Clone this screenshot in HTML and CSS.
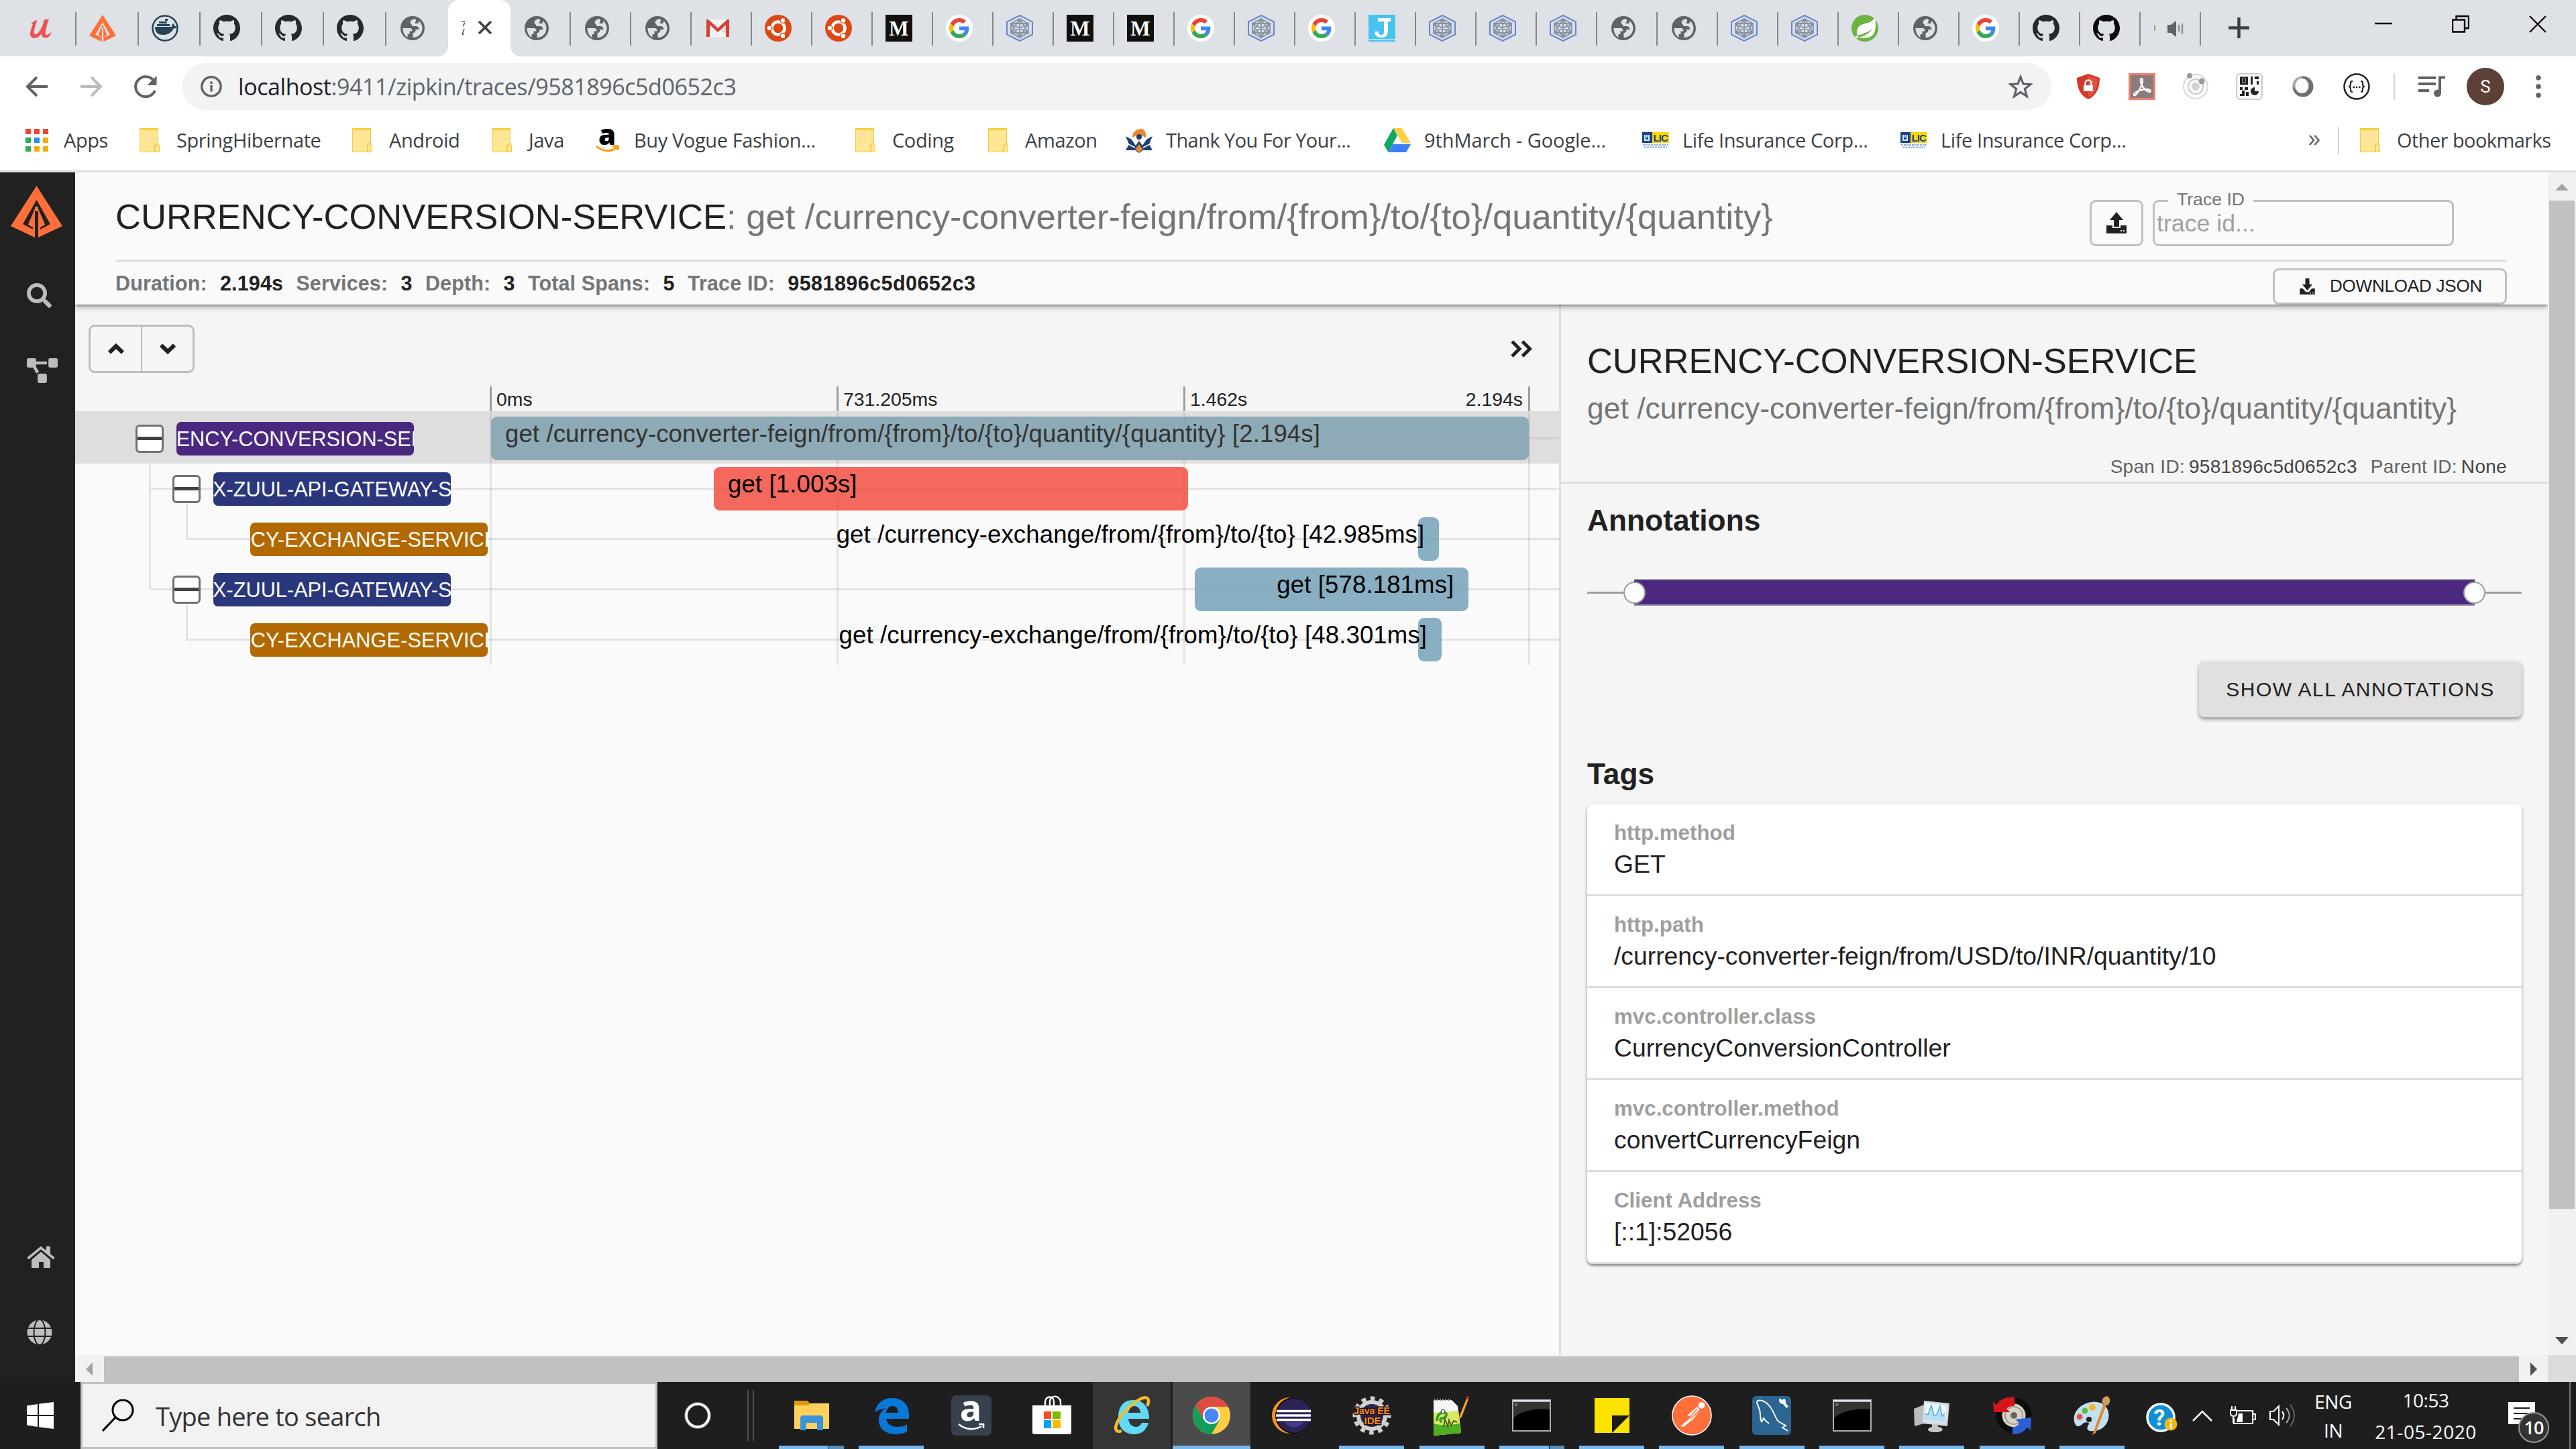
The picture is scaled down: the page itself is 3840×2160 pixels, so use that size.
FILE: index.html
```html
<!DOCTYPE html>
<html lang="en">
<head>
<meta charset="utf-8">
<title>Zipkin</title>
<link rel="stylesheet" href="styles.css">
</head>
<body>
<svg class="defs" aria-hidden="true">
  <symbol id="globe" viewBox="0 0 40 40"><circle cx="20" cy="20" r="18" fill="#5f6368"/><path d="M5.500 20h10c3 0 4 2 4 4.500h-4V29h-3v5C8 31 5.500 26 5.500 20zM25 6c-4 0-8 2-8.500 5 0 3 3 3 3 6h5c3 0 5 2 5 5h-5c0 4-2 5-4 5v7c8 0 14-6 14-14 0-4-2-8-5-11l-1 4h-5c0-2 3-3 .500-7z" fill="#dee1e6"/></symbol>
  <symbol id="github" viewBox="0 0 16 16"><path d="M8 0C3.58 0 0 3.58 0 8c0 3.54 2.29 6.53 5.47 7.59.4.07.55-.17.55-.38 0-.19-.01-.82-.01-1.49-2.01.37-2.53-.49-2.69-.94-.09-.23-.48-.94-.82-1.13-.28-.15-.68-.52-.01-.53.63-.01 1.08.58 1.23.82.72 1.21 1.87.87 2.33.66.07-.52.28-.87.51-1.07-1.78-.2-3.64-.89-3.64-3.95 0-.87.31-1.59.82-2.15-.08-.2-.36-1.02.08-2.12 0 0 .67-.21 2.2.82.64-.18 1.32-.27 2-.27s1.36.09 2 .27c1.53-1.04 2.2-.82 2.2-.82.44 1.1.16 1.92.08 2.12.51.56.82 1.27.82 2.15 0 3.07-1.87 3.75-3.65 3.95.29.25.54.73.54 1.48 0 1.07-.01 1.93-.01 2.2 0 .21.15.46.55.38A8.01 8.01 0 0016 8c0-4.42-3.58-8-8-8z"/></symbol>
  <symbol id="google" viewBox="0 0 40 40"><circle cx="20" cy="20" r="20" fill="#fff"/><g transform="translate(5 5) scale(.625)"><path fill="#EA4335" d="M24 9.5c3.54 0 6.71 1.22 9.21 3.6l6.85-6.85C35.9 2.38 30.47 0 24 0 14.62 0 6.51 5.38 2.56 13.22l7.98 6.19C12.43 13.72 17.74 9.5 24 9.5z"/><path fill="#4285F4" d="M46.98 24.55c0-1.57-.15-3.09-.38-4.55H24v9.02h12.94c-.58 2.96-2.26 5.48-4.78 7.18l7.73 6c4.51-4.18 7.09-10.36 7.09-17.65z"/><path fill="#FBBC05" d="M10.53 28.59c-.48-1.45-.76-2.99-.76-4.59s.27-3.14.76-4.59l-7.98-6.19C.92 16.46 0 20.12 0 24c0 3.88.92 7.54 2.56 10.78l7.97-6.19z"/><path fill="#34A853" d="M24 48c6.48 0 11.93-2.13 15.89-5.81l-7.73-6c-2.15 1.45-4.92 2.3-8.16 2.3-6.26 0-11.57-4.22-13.47-9.91l-7.98 6.19C6.51 42.62 14.62 48 24 48z"/></g></symbol>
  <symbol id="hex" viewBox="0 0 40 40"><path d="M20 1l19 9.500v19L20 39 1 29.500v-19z" fill="#d8dff0" stroke="#6a84c8" stroke-width="2"/><path d="M20 6l13 7v14l-13 7-13-7V13zM20 6v28M7 13l26 14M33 13L7 27M20 6L7 27h26zM20 34L7 13h26z" fill="none" stroke="#87929c" stroke-width="1.800"/></symbol>
  <symbol id="medium" viewBox="0 0 40 40"><path d="M0 0h40v40H0z" fill="#12100e"/><text x="20" y="31" text-anchor="middle" font-family="Liberation Serif, serif" font-weight="bold" font-size="31" fill="#fff">M</text></symbol>
  <symbol id="ubuntu" viewBox="0 0 40 40"><circle cx="20" cy="20" r="20" fill="#dd4814"/><circle cx="20" cy="20" r="9.500" fill="none" stroke="#fff" stroke-width="4.500"/><g fill="#fff" stroke="#dd4814" stroke-width="1.500"><circle cx="7" cy="20" r="4"/><circle cx="27" cy="8.500" r="4"/><circle cx="27" cy="31.500" r="4"/></g></symbol>
  <symbol id="zipkin" viewBox="0 0 77 77"><path fill="#ff7038" fill-rule="evenodd" d="M38.500 0L77 60 41 77V31h-5v46L0 60zM38.500 21L18 57l15 8v-6l-6-4 8.500-17h6L50 55l-6 4v6l15-8z"/><path fill="#ff7038" d="M36 34v30l-10-6zM41 34v30l10-6z"/></symbol>
  <symbol id="folder" viewBox="0 0 30 36"><path d="M.5.5h27v25h2v10H.5z" fill="#ffe694" stroke="#f0cb45"/><path d="M.5.500h27v2.500h-27z" fill="#f9cf3a"/><path d="M23 35.500v-9c0-4 5-4 5-1" fill="none" stroke="#f0c23a" stroke-width="1.500"/></symbol>
  <symbol id="lic" viewBox="0 0 40 24"><path d="M0 0h15v16H0z" fill="#14438e"/><path d="M15 0h25v16H15z" fill="#ffd500"/><path d="M4 4v8h6V4M7 4v4" stroke="#dfe8f5" stroke-width="2" fill="none"/><text x="27.500" y="14" text-anchor="middle" font-family="Liberation Sans, sans-serif" font-size="15" font-weight="bold" textLength="22" fill="#14438e">LIC</text><path d="M1 19h38M3 22.500h34" stroke="#8fabd2" stroke-width="2" stroke-dasharray="3 1"/></symbol>
  <symbol id="cmd" viewBox="0 0 58 48"><path d="M0 0h58v48H0z" fill="#a9afb4"/><path d="M2 4h54v42H2z" fill="#000"/><path d="M2 4h54v11C34 13 12 18 2 28z" fill="#333"/><path d="M1 1h56v2H1z" fill="#dfe5ea"/><path d="M4 7h5M4 9h3" stroke="#aaa"/></symbol>
</svg>

<div class="tabs">
  <div class="tab early"><svg viewBox="0 0 40 40"><path d="M5 13c5-3 9-6 9-5 0 3-5 13-4 19 2 7 10-4 13-13l2-7h7c-3 8-7 21-4 23 2 1 4-2 8-4-2 6-6 9-10 8-4 0-5-3-5-6-5 8-17 10-17 0 0-5 3-11 4-14z" fill="#ec5252"/></svg></div>
  <div class="tab early"><svg><use href="#zipkin"/></svg></div>
  <div class="tab early"><svg viewBox="0 0 40 40"><circle cx="20" cy="20" r="18.500" fill="none" stroke="#254356" stroke-width="2.500"/><path d="M5 18h25c0-3 1-4 2-5 2 1 2 3 2 4 1 0 3 0 4 1-1 2-3 3-5 2-3 7-9 10-16 10C9 30 5 26 5 18z" fill="#254356"/><path d="M8 14h19v3H8zM11 10h12v3H11zM20 6h4v3h-4z" fill="#254356"/></svg></div>
  <div class="tab early"><svg fill="#24292e"><use href="#github"/></svg></div>
  <div class="tab early"><svg fill="#24292e"><use href="#github"/></svg></div>
  <div class="tab early"><svg fill="#24292e"><use href="#github"/></svg></div>
  <div class="tab early last"><svg><use href="#globe"/></svg></div>
  <div class="tab active"><svg class="sliver" viewBox="0 0 5 22"><path d="M0 1h5M5 3L2 8M4 12L1 20h3" stroke="#555" stroke-width="1.500" fill="none"/></svg><svg class="close" viewBox="0 0 20 20"><path d="M1 1l18 18M19 1L1 19" stroke="#3c4043" stroke-width="3.500"/></svg></div>
  <div class="tab"><svg><use href="#globe"/></svg></div>
  <div class="tab"><svg><use href="#globe"/></svg></div>
  <div class="tab"><svg><use href="#globe"/></svg></div>
  <div class="tab"><svg viewBox="0 0 40 40"><path d="M3 7h34v26H3z" fill="#f2f2f2"/><path d="M20 20l17 13V9z" fill="#dcdcdc"/><path d="M3 33V7h3l14 13L34 7h3v26h-5V15L20 26 8 15v18z" fill="#d93f35"/></svg></div>
  <div class="tab"><svg><use href="#ubuntu"/></svg></div>
  <div class="tab"><svg><use href="#ubuntu"/></svg></div>
  <div class="tab"><svg><use href="#medium"/></svg></div>
  <div class="tab"><svg><use href="#google"/></svg></div>
  <div class="tab"><svg><use href="#hex"/></svg></div>
  <div class="tab"><svg><use href="#medium"/></svg></div>
  <div class="tab"><svg><use href="#medium"/></svg></div>
  <div class="tab"><svg><use href="#google"/></svg></div>
  <div class="tab"><svg><use href="#hex"/></svg></div>
  <div class="tab"><svg><use href="#google"/></svg></div>
  <div class="tab"><svg viewBox="0 0 40 40"><path d="M0 0h40v40H0z" fill="#46c3ee"/><path d="M0 36h40v2H0z" fill="#a5e2f7"/><path d="M14 5h19v5h-4v13c0 8-4 11-9 11-7 0-11-3-11-9h6c0 3 1 5 4 5s4-2 4-6V10h-9z" fill="#fff"/></svg></div>
  <div class="tab"><svg><use href="#hex"/></svg></div>
  <div class="tab"><svg><use href="#hex"/></svg></div>
  <div class="tab"><svg><use href="#hex"/></svg></div>
  <div class="tab"><svg><use href="#globe"/></svg></div>
  <div class="tab"><svg><use href="#globe"/></svg></div>
  <div class="tab"><svg><use href="#hex"/></svg></div>
  <div class="tab"><svg><use href="#hex"/></svg></div>
  <div class="tab"><svg viewBox="0 0 40 40"><circle cx="20" cy="20" r="20" fill="#6db33f"/><path d="M35 4c2 13 2 27-10 30-6 1-12 0-16 0 12-2 18-7 22-13-6 5-12 7-22 10-3-7 0-14 8-17 8-2 14-3 18-10z" fill="#fff"/><circle cx="7.500" cy="33" r="1.800" fill="#fff"/></svg></div>
  <div class="tab"><svg><use href="#globe"/></svg></div>
  <div class="tab"><svg><use href="#google"/></svg></div>
  <div class="tab"><svg fill="#24292e"><use href="#github"/></svg></div>
  <div class="tab"><svg fill="#0d0a0c"><use href="#github"/></svg></div>
  <div class="tab"><svg viewBox="0 0 40 40"><path d="M2 16v8" stroke="#7a8a35" stroke-width="1.500"/><path d="M21 15h5l8-6v24l-8-6h-5z" fill="#5f6368"/><path d="M38 15v10M43 13v15" stroke="#8a8d91" stroke-width="2.500"/></svg></div>
  <svg class="newtab" viewBox="0 0 31 31"><path d="M15.500 0v31M0 15.500h31" stroke="#3c4043" stroke-width="4.500"/></svg>
  <div class="winctl">
    <svg viewBox="0 0 26 26"><path d="M0 12h26" stroke="#000" stroke-width="2.500"/></svg>
    <svg viewBox="0 0 26 26"><path d="M1 6.500h18v18H1zM6.500 6V1.200H25V19h-5" fill="none" stroke="#000" stroke-width="2.400"/></svg>
    <svg viewBox="0 0 26 26"><path d="M1 1l24 24M25 1L1 25" stroke="#000" stroke-width="2.200"/></svg>
  </div>
</div>

<div class="toolbar">
  <svg class="nav" viewBox="0 0 34 34"><path d="M33 17H3M17 3L3 17l14 14" fill="none" stroke="#5f6368" stroke-width="4"/></svg>
  <svg class="nav" viewBox="0 0 34 34"><path d="M1 17h30M17 3l14 14-14 14" fill="none" stroke="#babcbe" stroke-width="4"/></svg>
  <svg class="nav" viewBox="0 0 34 34"><path d="M29 8A15 15 0 1 0 31 23" fill="none" stroke="#5f6368" stroke-width="4"/><path d="M33.500 1v14h-14z" fill="#5f6368"/></svg>
  <div class="omnibox">
    <svg class="info" viewBox="0 0 32 32"><circle cx="16" cy="16" r="14.200" fill="none" stroke="#5f6368" stroke-width="3.400"/><path d="M16 14v9.500M16 8.500v3.500" stroke="#5f6368" stroke-width="3.400"/></svg>
    <span class="url"><b>localhost</b>:9411/zipkin/traces/9581896c5d0652c3</span>
    <svg class="star" viewBox="0 0 36 36"><path d="M18 3.500l4 10.500 11 .6-8.600 7 3 11L18 26.400 8.600 32.600l3-11-8.600-7L14 14z" fill="none" stroke="#5f6368" stroke-width="3.200"/></svg>
  </div>
  <div class="exts">
    <svg viewBox="0 0 40 40"><path d="M20 1l17 6c0 14-4 26-17 32C7 33 3 21 3 7z" fill="#d33a2c"/><path d="M20 4l14 5c0 11-4 22-14 27z" fill="#e0503f"/><path d="M13 18h14v9H13z" fill="#fff"/><path d="M15.500 18v-3a4.500 4.500 0 0 1 9 0v3" fill="none" stroke="#fff" stroke-width="2.400"/></svg>
    <svg viewBox="0 0 40 40"><path d="M1.500 1.500h37v37h-37z" fill="#8a7c7b" stroke="#f0806f" stroke-width="3"/><path d="M19 8c4 0 1 10-3 17-4 8-8 10-8 7 0-4 12-8 19-8s7 5 3 4c-5-2-12-10-12-16 0-2 0-4 1-4z" fill="none" stroke="#fff" stroke-width="2.400"/></svg>
    <svg viewBox="0 0 40 40"><circle cx="20" cy="20" r="18" fill="none" stroke="#d9d9d9" stroke-width="2"/><circle cx="20" cy="20" r="11" fill="none" stroke="#cfcfcf" stroke-width="2.500"/><circle cx="20" cy="20" r="6" fill="#d2d2d2"/><circle cx="11" cy="4" r="4" fill="#999"/><circle cx="29" cy="12" r="4.500" fill="#999"/></svg>
    <svg viewBox="0 0 40 40"><rect x="1" y="1" width="38" height="38" rx="5" fill="#f8f8f8" stroke="#ccc" stroke-width="2"/><path d="M7.500 7h9v9h-9zM11 10.500h2v2h-2z" fill="none" stroke="#222" stroke-width="3"/><path d="M22 5h3v12h-3zM28 5h6v4h-6zM31 12h3v5h-3zM6 21h4v4H6zM13 21h5v4h-5zM9 26h4v8H6v-3h3zM15 28h4v6h-4z" fill="#222"/><path d="M28 21v6h6a6 6 0 1 1-6-6z" fill="#222"/></svg>
    <svg viewBox="0 0 40 40"><circle cx="20" cy="20" r="15.500" fill="#707070"/><path d="M20 4.500a15.500 15.500 0 0 0-15.500 15.500l7 7 8-22z" fill="#a3a3a3"/><ellipse cx="18.500" cy="19" rx="10" ry="11" fill="#fbfbfb"/></svg>
    <svg viewBox="0 0 40 40"><circle cx="20" cy="20" r="18.500" fill="#fff" stroke="#222" stroke-width="2.500"/><path d="M14 12c-3 0-3 1-3 4s-1 4-3 4c2 0 3 1 3 4s0 4 3 4M26 12c3 0 3 1 3 4s1 4 3 4c-2 0-3 1-3 4s0 4-3 4" fill="none" stroke="#222" stroke-width="2.200"/><path d="M14.500 21h2.400m1.900 0h2.400m1.900 0h2.400" stroke="#222" stroke-width="2.400"/></svg>
  </div>
  <i class="vsep"></i>
  <svg class="playlist" viewBox="0 0 40 32"><path d="M0 3h26M0 12h26M0 22h16" stroke="#5f6368" stroke-width="4"/><path d="M32 27V2.500h8" fill="none" stroke="#5f6368" stroke-width="4"/><circle cx="28.500" cy="26" r="5.500" fill="#5f6368"/></svg>
  <span class="avatar">S</span>
  <svg class="dots" viewBox="0 0 8 34"><g fill="#5f6368"><circle cx="4" cy="4" r="3.800"/><circle cx="4" cy="17" r="3.800"/><circle cx="4" cy="30" r="3.800"/></g></svg>
</div>

<div class="bookmarks">
  <div class="bm"><svg viewBox="0 0 40 40"><g fill="#f44336"><path d="M3 3h8v8H3zM16 3h8v8h-8zM29 3h8v8h-8z"/></g><path d="M3 16h8v8H3zM3 29h8v8H3z" fill="#34a853"/><path d="M16 16h8v8h-8z" fill="#2b8cf5"/><path d="M29 16h8v8h-8zM16 29h8v8h-8zM29 29h8v8h-8z" fill="#f9ab00"/></svg><span>Apps</span></div>
  <div class="bm"><svg class="fold"><use href="#folder"/></svg><span>SpringHibernate</span></div>
  <div class="bm"><svg class="fold"><use href="#folder"/></svg><span>Android</span></div>
  <div class="bm"><svg class="fold"><use href="#folder"/></svg><span>Java</span></div>
  <div class="bm"><svg viewBox="0 0 40 40"><text x="20" y="27" text-anchor="middle" font-family="Open Sans, sans-serif" font-weight="800" font-size="42">a</text><path d="M4 29c9 8 22 9 30 2M28 29h8v6" fill="none" stroke="#f90" stroke-width="3"/></svg><span>Buy Vogue Fashion...</span></div>
  <div class="bm"><svg class="fold"><use href="#folder"/></svg><span>Coding</span></div>
  <div class="bm"><svg class="fold"><use href="#folder"/></svg><span>Amazon</span></div>
  <div class="bm tight"><svg viewBox="0 0 40 40"><path d="M10 16c0-8 5-13 15-13 4 3 6 8 5 13l-6-3-4 8-4-8z" fill="#e8862a"/><path d="M0 14l9 5 6 9 5-7 5 7 6-9 9-5-5 12 5 9H26l-6 4-6-4H0l5-9z" fill="#1d3f72"/><circle cx="20" cy="15" r="4" fill="#1d3f72"/><path d="M14 34l6-8 6 8-6 4z" fill="#e8862a"/><path d="M2 25l12 6M38 25l-12 6" stroke="#fff" stroke-width="1.500"/></svg><span>Thank You For Your...</span></div>
  <div class="bm loose"><svg viewBox="0 0 40 40"><path d="M14 2h13l13 22H27z" fill="#ffcf48"/><path d="M14 2L0 27l6.500 11L20 13z" fill="#11a861"/><path d="M6.500 38L13 26h27l-7 12z" fill="#3c80f6"/></svg><span>9thMarch - Google...</span></div>
  <div class="bm"><svg><use href="#lic"/></svg><span>Life Insurance Corp...</span></div>
  <div class="bm"><svg><use href="#lic"/></svg><span>Life Insurance Corp...</span></div>
  <svg class="more" viewBox="0 0 16 16"><path d="M1 1l6 7-6 7M8.500 1l6 7-6 7" fill="none" stroke="#5f6368" stroke-width="2.600"/></svg>
  <div class="bm other tight"><svg class="fold"><use href="#folder"/></svg><span>Other bookmarks</span></div>
</div>

<div class="page">
  <nav class="side">
    <svg class="brand"><use href="#zipkin"/></svg>
    <svg class="s-search" viewBox="0 0 512 512"><path d="M505 442.700L405.300 343c-4.500-4.500-10.600-7-17-7H372c27.600-35.300 44-79.700 44-128C416 93.100 322.900 0 208 0S0 93.100 0 208s93.100 208 208 208c48.300 0 92.700-16.400 128-44v16.300c0 6.400 2.500 12.500 7 17l99.700 99.700c9.400 9.400 24.600 9.400 33.900 0l28.300-28.300c9.400-9.400 9.400-24.600.1-34zM208 336c-70.700 0-128-57.200-128-128 0-70.700 57.200-128 128-128 70.700 0 128 57.200 128 128 0 70.700-57.200 128-128 128z"/></svg>
    <svg class="s-dep" viewBox="0 0 640 512"><path d="M384 320H256c-17.670 0-32 14.330-32 32v128c0 17.670 14.330 32 32 32h128c17.670 0 32-14.330 32-32V352c0-17.670-14.330-32-32-32zM192 32c0-17.670-14.330-32-32-32H32C14.330 0 0 14.330 0 32v128c0 17.670 14.330 32 32 32h95.720l73.160 128.040C211.980 300.980 232.400 288 256 288h.28L192 175.510V128h224V64H192V32zM608 0H480c-17.670 0-32 14.330-32 32v128c0 17.670 14.330 32 32 32h128c17.670 0 32-14.330 32-32V32c0-17.670-14.330-32-32-32z"/></svg>
    <svg class="s-home" viewBox="0 0 42 32"><path d="M21 8l14 12v12H25v-9h-7v9H7V20z"/><path d="M1.500 18L21 2l19.500 16" fill="none" stroke="#bdbdbd" stroke-width="3.600"/><path d="M29 0h6v12l-6-5z"/></svg>
    <svg class="s-globe" viewBox="0 0 38 38"><circle cx="19" cy="19" r="18.500"/><path d="M0 13h38M0 25h38" stroke="#212121" stroke-width="2"/><ellipse cx="19" cy="19" rx="8.500" ry="19" fill="none" stroke="#212121" stroke-width="2"/></svg>
  </nav>

  <div class="main">
    <header class="head">
      <div class="head-top">
        <h1>CURRENCY-CONVERSION-SERVICE<em>: get /currency-converter-feign/from/{from}/to/{to}/quantity/{quantity}</em></h1>
        <button class="upload"><svg viewBox="0 0 32 32"><path d="M16 0l10 12h-6v10h-8V12H6z"/><path d="M1 20h9v4h12v-4h9v12H1z"/><path d="M22 28h2m2 0h2" stroke="#fafafa" stroke-width="2"/></svg></button>
        <div class="field"><span class="legend">Trace ID</span><span class="ph">trace id...</span></div>
      </div>
      <div class="head-stats">
        <b>Duration:</b><strong>2.194s</strong><b>Services:</b><strong>3</strong><b>Depth:</b><strong>3</strong><b>Total Spans:</b><strong>5</strong><b>Trace ID:</b><strong class="tid">9581896c5d0652c3</strong>
        <button class="download"><svg viewBox="0 0 32 32"><path d="M16 24L6 12h6V0h8v12h6z"/><path d="M1 20h6l6 7h6l6-7h6v12H1z"/><path d="M21 29h2m3 0h2" stroke="#fafafa" stroke-width="2"/></svg><span>DOWNLOAD JSON</span></button>
      </div>
    </header>

    <div class="body">
      <section class="trace">
        <div class="trace-tools">
          <div class="updown"><button><svg viewBox="0 0 26 18"><path d="M3 14.500L13 5l10 9.500" fill="none" stroke="#212121" stroke-width="6"/></svg></button><button><svg viewBox="0 0 26 18"><path d="M3 3.500L13 13l10-9.500" fill="none" stroke="#212121" stroke-width="6"/></svg></button></div>
          <svg class="collapse" viewBox="0 0 34 26"><path d="M3 2l11 11L3 24M18.500 2l11 11-11 11" fill="none" stroke="#212121" stroke-width="5"/></svg>
        </div>
        <div class="ticks"><span>0ms</span><span>731.205ms</span><span class="two"><i>1.462s</i><i>2.194s</i></span></div>
        <div class="rows">
          <div class="gridlines"><i></i><i></i><i></i></div>
          <div class="row sel">
            <div class="tree l0"><i class="tog"></i><span class="svc purple"><b>CURRENCY-CONVERSION-SERVICE</b></span></div>
            <div class="lane"><div class="bar" style="margin-left:0.06%;width:99.9%"><span>get /currency-converter-feign/from/{from}/to/{to}/quantity/{quantity} [2.194s]</span></div></div>
          </div>
          <div class="row down2">
            <div class="tree l1"><i class="tog"></i><span class="svc blue"><b>NETFLIX-ZUUL-API-GATEWAY-SERVER</b></span></div>
            <div class="lane"><div class="bar red" style="margin-left:21.500%;width:45.640%"><span>get [1.003s]</span></div></div>
          </div>
          <div class="row down1">
            <div class="tree l2"><span class="svc orange"><b>CURRENCY-EXCHANGE-SERVICE</b></span></div>
            <div class="lane"><div class="bar" style="margin-left:89.300%;width:2%"><span class="left out">get /currency-exchange/from/{from}/to/{to} [42.985ms]</span></div></div>
          </div>
          <div class="row">
            <div class="tree l1"><i class="tog"></i><span class="svc blue"><b>NETFLIX-ZUUL-API-GATEWAY-SERVER</b></span></div>
            <div class="lane"><div class="bar" style="margin-left:67.800%;width:26.350%"><span class="left">get [578.181ms]</span></div></div>
          </div>
          <div class="row down1">
            <div class="tree l2"><span class="svc orange"><b>CURRENCY-EXCHANGE-SERVICE</b></span></div>
            <div class="lane"><div class="bar" style="margin-left:89.300%;width:2.250%"><span class="left out">get /currency-exchange/from/{from}/to/{to} [48.301ms]</span></div></div>
          </div>
        </div>
      </section>

      <aside class="detail">
        <div class="d-head">
          <h2>CURRENCY-CONVERSION-SERVICE</h2>
          <p class="sub">get /currency-converter-feign/from/{from}/to/{to}/quantity/{quantity}</p>
          <p class="ids"><span>Span ID:</span><b>9581896c5d0652c3</b><span class="pid">Parent ID:</span><b>None</b></p>
        </div>
        <div class="d-body">
          <h3>Annotations</h3>
          <div class="slider"><i></i><i></i></div>
          <button class="showall"><span>SHOW ALL ANNOTATIONS</span></button>
          <h3 class="tags-h">Tags</h3>
          <dl class="tags">
            <div><dt>http.method</dt><dd>GET</dd></div>
            <div><dt>http.path</dt><dd>/currency-converter-feign/from/USD/to/INR/quantity/10</dd></div>
            <div><dt>mvc.controller.class</dt><dd>CurrencyConversionController</dd></div>
            <div><dt>mvc.controller.method</dt><dd>convertCurrencyFeign</dd></div>
            <div><dt>Client Address</dt><dd>[::1]:52056</dd></div>
          </dl>
        </div>
      </aside>
    </div>
    <div class="hbar"><i class="al"></i><div class="thumb"></div><i class="ar"></i></div>
  </div>

  <div class="vbar"><i class="au"></i><div class="thumb"></div><i class="ad"></i><div class="corner"></div></div>
</div>

<div class="taskbar">
  <div class="start"><svg viewBox="0 0 40 40"><path d="M0 5.500l16-2.500v16H0zM18 2.700L40 0v19H18zM0 21h16v16L0 34.500zM18 21h22v19l-22-2.800z" fill="#fff"/></svg></div>
  <div class="search"><svg viewBox="0 0 48 48"><circle cx="31" cy="16" r="15" fill="none" stroke="#000" stroke-width="3"/><path d="M20 27L1 47" stroke="#000" stroke-width="3"/></svg><span>Type here to search</span></div>
  <svg class="cortana" viewBox="0 0 40 40"><circle cx="20" cy="20" r="17.200" fill="none" stroke="#888" stroke-width="5"/><circle cx="20" cy="20" r="17" fill="none" stroke="#fff" stroke-width="3.600"/></svg>
  <i class="grip"></i>
  <div class="apps">
    <div class="app run multi"><svg viewBox="0 0 60 60"><path d="M4 8h20l4 5v10H4z" fill="#dd9d00"/><path d="M4 15h21l3-3h28v38H4z" fill="#ffd15c"/><path d="M13 52V34c0-2 1-4 4-4h26c3 0 4 2 4 4v18H38V41H22v11z" fill="#3a94dc"/></svg></div>
    <div class="app run"><svg viewBox="0 0 60 60"><path d="M5 25C8 11 18 4 31 4c16 0 25 11 25 24v7H22c1 8 8 12 16 12 6 0 11-1 15-4v11c-5 3-11 4-17 4-15 0-25-9-25-21 0-8 4-15 11-18-7 1-13 3-17 6zm17 1h18c0-6-3-10-9-10-5 0-9 5-9 10z" fill="#0a78d7"/></svg></div>
    <div class="app"><svg viewBox="0 0 60 60"><rect width="60" height="60" rx="7" fill="#36414d"/><text x="29" y="38" text-anchor="middle" font-family="Open Sans, sans-serif" font-weight="bold" font-size="54" fill="#fff">a</text><path d="M11 43c11 9 24 9 34 3M41 43h7v6" fill="none" stroke="#fff" stroke-width="2.600"/></svg></div>
    <div class="app"><svg viewBox="0 0 60 60"><path d="M1 15h58v40c0 2-1 3-3 3H4c-2 0-3-1-3-3z" fill="#fff"/><path d="M20 16V10c0-10 13-10 13 0v6M27 16V9c0-10 16-10 16 2v5" fill="none" stroke="#fff" stroke-width="2.400"/><path d="M18 24h11v11H18z" fill="#f25022"/><path d="M31 24h12v11H31z" fill="#7fba00"/><path d="M18 37h11v12H18z" fill="#00a4ef"/><path d="M31 37h12v12H31z" fill="#ffb900"/></svg></div>
    <div class="app hov"><svg viewBox="0 0 60 60"><path d="M32 7c16 0 24 11 24 28H25c1 8 6 12 11 12 4 0 7-2 9-6h10c-3 11-11 17-21 17-15 0-24-10-24-25S17 7 32 7zm-7 19h18c0-6-4-10-9-10s-8 4-9 10z" fill="#62d9f5"/><path d="M15 53c-14 5-11-13 6-30C36 7 50 0 54 5c2 3 1 7-1 11" fill="none" stroke="#f4be2c" stroke-width="4.500"/></svg></div>
    <div class="app act"><svg viewBox="0 0 60 60"><circle cx="30" cy="30" r="28" fill="#ffcd41"/><path d="M30 17h25A28 28 0 0 0 6.500 15l12 22z" fill="#dc4c40"/><path d="M18.500 37L6.500 15A28 28 0 0 0 30 58l12-21z" fill="#149c5b"/><circle cx="30" cy="30" r="13" fill="#fff"/><circle cx="30" cy="30" r="10.500" fill="#4687f4"/></svg></div>
    <div class="app"><svg viewBox="0 0 60 60"><path d="M28 3a27 27 0 0 0 0 54C4 46 8 12 28 3z" fill="#f7941e"/><circle cx="33" cy="30" r="27" fill="#111"/><circle cx="34" cy="30" r="25.500" fill="#2c2255"/><path d="M20 40h28c-5 10-22 10-28 0z" fill="#46388c"/><path d="M8 23.500h51M7 30h52M8 36.500h51" stroke="#fff" stroke-width="3.400"/></svg></div>
    <div class="app run"><svg viewBox="0 0 60 60"><circle cx="30" cy="30" r="25.500" fill="none" stroke="#d0d0d0" stroke-width="6" stroke-dasharray="6.700 6.650" stroke-dashoffset="3"/><circle cx="30" cy="30" r="20" fill="#2e2257" stroke="#d0d0d0" stroke-width="6"/><g font-family="Liberation Sans, sans-serif" font-weight="bold" fill="#ff8b1f" stroke="#1a1210" stroke-width="3" paint-order="stroke" text-anchor="middle"><text x="30" y="28" font-size="14">Java EE</text><text x="31" y="43" font-size="15">IDE</text></g></svg></div>
    <div class="app run"><svg viewBox="0 0 60 60"><path d="M3 7h27l9 9 5 40-41 4z" fill="#f4f7f4"/><path d="M3 26l37-3 4 33-41 4z" fill="#d7ea62"/><path d="M3 42c14 4 27 2 40 0l1 14-41 4z" fill="#4fae22"/><path d="M8 38c0-9 6-14 12-12 4 2 1 8-3 8s-5 3-2 6" fill="none" stroke="#3f9a2a" stroke-width="4"/><circle cx="17" cy="24" r="3" fill="#fff" stroke="#333"/><path d="M18 47l2-11 4 10 2-9 3 8 4-7 5 2" fill="none" stroke="#4b5a20" stroke-width="2"/><path d="M4 6.500h25" stroke="#888" stroke-width="3" stroke-dasharray="2 2"/><path d="M39 38l3-8L52 5l3 1-10 26z" fill="#f5a623"/><path d="M52 5l1.500-4 2.500 1-1.500 4z" fill="#d33"/></svg></div>
    <div class="app run multi"><svg class="cmdi"><use href="#cmd"/></svg></div>
    <div class="app run"><svg viewBox="0 0 60 60"><path d="M4 4h52v52H4z" fill="#ffe300"/><path d="M30 30h26L30 56z" fill="#1c1c1c"/></svg></div>
    <div class="app run"><svg viewBox="0 0 60 60"><circle cx="30" cy="30" r="29" fill="#ff6f3c" stroke="#fff" stroke-width="1.600"/><circle cx="44.500" cy="15" r="4.800" fill="#fff"/><path d="M38 17l4 5-10 14-7 5-7 6-5-1 12-10 4-5-6-1z" fill="#fff"/><path d="M38 20L26 34M41 22L28 36" stroke="#ff6f3c" stroke-width="1.400"/></svg></div>
    <div class="app run"><svg viewBox="0 0 60 60"><rect x="1" y="1" width="58" height="58" rx="6" fill="#2c6591"/><path d="M15 40c-3-7-1-15-4-21-1-5-5-8-2-11 7-2 15 3 20 11 5 7 7 16 11 20l11 6-5 3 8 5M15 40l3-6c2 4 5 5 8 8" fill="none" stroke="#fff" stroke-width="1.900"/><path d="M42 4l3 3 4-2c3 3 1 5 3 8l3 4-3 2-5-6c-4 0-6-3-6-6z" fill="#fff"/></svg></div>
    <div class="app run"><svg class="cmdi"><use href="#cmd"/></svg></div>
    <div class="app run"><svg viewBox="0 0 60 60"><path d="M3 20l15-6v28L4 46z" fill="#b9bdc1"/><path d="M18 8l38 4-3 34-37-4z" fill="#d5dade"/><path d="M20 11l32 4-3 27-31-4z" fill="#eef7fc"/><path d="M19 27l5 2 5-14 4 15 4-1 5-13 3 15 4-4v14l-31-4z" fill="#b8dff2"/><path d="M19 27l5 2 5-14 4 15 4-1 5-13 3 15 4-4" fill="none" stroke="#5aaede" stroke-width="1.600"/><path d="M30 43h8l1 4c10 1 9 8-4 8s-14-6-5-8z" fill="#c6c9cc"/></svg></div>
    <div class="app run"><svg viewBox="0 0 60 60"><circle cx="33" cy="30" r="22" fill="#d8d2c4" stroke="#0c0c0c" stroke-width="9"/><circle cx="33" cy="30" r="13" fill="none" stroke="#a59e8e" stroke-width="2"/><circle cx="33" cy="30" r="5" fill="#666"/><path d="M2 10l5 4C14 5 22 2 34 3v13c-7 0-10 1-12 5l6 4H3z" fill="#d6141c"/><path d="M58 52l-5-4c-7 8-12 10-22 10V47c6 0 8-2 10-6l-6-5 24-3z" fill="#2d5fd7"/></svg></div>
    <div class="app run"><svg viewBox="0 0 60 60"><path d="M30 10C48 8 58 20 55 35 52 48 40 55 27 53c-6-1-3-8-1-10 1-3-5-4-9-1-4 4-8 6-11 2C-1 32 8 13 30 10z" fill="#c3e0f0"/><circle cx="12" cy="32" r="4.500" fill="#e5534a"/><circle cx="20" cy="23" r="4.500" fill="#58b947"/><circle cx="31" cy="18" r="5" fill="#f7b52c"/><circle cx="26" cy="36" r="4" fill="#1e1e1e"/><path d="M48 12l4 2-16 42-5 3z" fill="#e08b2e"/><path d="M46 12c-2-6 2-10 7-11 6 4 5 9 1 14z" fill="#cf9d63"/></svg></div>
  </div>
  <div class="tray">
    <svg class="help" viewBox="0 0 48 44"><circle cx="23" cy="22" r="20" fill="#0f8fd5" stroke="#fff" stroke-width="3.500"/><text x="21" y="34" text-anchor="middle" font-family="Roboto, sans-serif" font-weight="bold" font-size="34" fill="#fff">?</text><circle cx="38" cy="32" r="9.500" fill="#f5b50f"/><path d="M38 25.500v3m0 2v8" stroke="#fff" stroke-width="3"/></svg>
    <svg class="caret" viewBox="0 0 30 17"><path d="M1 16L15 2l14 14" fill="none" stroke="#fff" stroke-width="2.500"/></svg>
    <svg class="batt" viewBox="0 0 40 28"><path d="M11 7h24v19H7v-8M36 12h3v8h-3" fill="none" stroke="#fff" stroke-width="2.200"/><path d="M14 11h6v13h-9z" fill="#fff"/><path d="M4 0v6m5-6v6M2 6h9v5c0 3-2 4-4.500 4S2 14 2 11zM6 15v10" fill="none" stroke="#fff" stroke-width="2"/></svg>
    <svg class="vol" viewBox="0 0 40 36"><path d="M1 12h5l8-8v28l-8-8H1z" fill="none" stroke="#fff" stroke-width="2"/><path d="M19 12c3 4 3 8 0 12" fill="none" stroke="#fff" stroke-width="2.200"/><path d="M25 7c6 7 6 15 0 22" fill="none" stroke="#aaa" stroke-width="2"/><path d="M31 2c8 10 8 22 0 32" fill="none" stroke="#666" stroke-width="2"/></svg>
    <div class="stack lang"><span>ENG</span><span>IN</span></div>
    <div class="stack clock"><span>10:53</span><span class="date">21-05-2020</span></div>
    <div class="note"><svg viewBox="0 0 40 40"><path d="M0 0h40v33H26l-8 7v-7H0z" fill="#fff"/><path d="M8 9h24M8 17h24M8 25h16" stroke="#1e1e1e" stroke-width="2"/></svg><span>10</span></div>
    <i class="peek"></i>
  </div>
</div>
</body>
</html>
```
FILE: styles.css
```css
* { box-sizing: border-box; }
html, body { margin: 0; padding: 0; }
body { width: 3840px; height: 2160px; overflow: hidden; display: flex; flex-direction: column; position: relative; background: #fff; font-family: "Liberation Sans", Arial, sans-serif; color: #212121; }
button { font: inherit; color: inherit; padding: 0; margin: 0; background: none; border: 0; }
svg { display: block; flex: none; }
h1, h2, h3, p, dl, dd, dt { margin: 0; font-weight: 400; }
em, i { font-style: normal; }
.defs { display: none; }

/* tab strip */
.tabs { height: 84px; background: #dee1e6; display: flex; padding-left: 22px; flex: none; }
.tab { width: 90px; height: 84px; padding: 22px 0 0 19px; flex: none; background: linear-gradient(#84888d, #84888d) right 18px / 2px 50px no-repeat; }
.tab svg { width: 40px; height: 40px; overflow: visible; }
.tab.early { width: 92.300px; }
.tab.last { background: none; }
.tab.active { width: 92.900px; background: #fff; border-radius: 16px 16px 0 0; padding: 31px 0 0 20px; display: flex; gap: 20px; position: relative; }
.tab.active::before, .tab.active::after { content: ""; position: absolute; bottom: 0; width: 16px; height: 16px; }
.tab.active::before { left: -16px; background: radial-gradient(circle at 0 0, transparent 16px, #fff 16px); }
.tab.active::after { right: -16px; background: radial-gradient(circle at 100% 0, transparent 16px, #fff 16px); }
.tab.active .sliver { width: 5px; height: 22px; }
.tab.active .close { width: 20px; height: 20px; }
.newtab { width: 31px; height: 31px; margin: 26px 0 0 41px; }
.winctl { display: flex; gap: 89px; margin: 23px 44px 0 auto; }
.winctl svg { width: 26px; height: 26px; }

/* toolbar */
.toolbar { height: 90px; display: flex; align-items: center; padding-left: 38px; flex: none; }
.nav { width: 34px; height: 34px; margin-right: 47px; }
.nav + .nav + .nav { margin-right: 37px; }
.omnibox { width: 2787px; height: 70px; border-radius: 35px; background: #f1f3f4; display: flex; align-items: center; padding: 0 28px; }
.info { width: 32px; height: 32px; margin-right: 24px; }
.url { font: 34px/70px "Open Sans", "Noto Sans", sans-serif; color: #5f6368; letter-spacing: -.43px; }
.url b { font-weight: 400; color: #202124; }
.star { width: 36px; height: 36px; margin-left: auto; }
.exts { display: flex; gap: 40px; margin-left: 35px; }
.exts svg { width: 40px; height: 40px; }
.vsep { width: 2px; height: 40px; background: #d0d2d5; margin-left: 35px; }
.playlist { width: 40px; height: 32px; margin-left: 35px; }
.avatar { width: 56px; height: 56px; border-radius: 50%; background: #5d4037; color: #fff; font: 26px/56px Roboto, sans-serif; text-align: center; margin-left: 32px; }
.dots { width: 8px; height: 34px; margin-left: 47px; }

/* bookmarks */
.bookmarks { height: 83px; flex: none; border-bottom: 3px solid #dadce0; padding: 0 0 10px 35px; display: grid; grid-template-columns: 168px 317px 208px 157px 385px 198px 210px 385px 385px 385px 609px 43px 1fr; align-items: center; }
.bm { display: flex; align-items: center; gap: 20px; font: 29px/40px "Open Sans", "Noto Sans", sans-serif; color: #3c4043; letter-spacing: -.4px; white-space: nowrap; }
.bm.tight { letter-spacing: -.57px; }
.bm.loose { letter-spacing: -.1px; }
.bm svg { width: 40px; height: 40px; }
.bm svg.fold { width: 30px; height: 36px; margin: 0 5px; }
.more { width: 16px; height: 16px; }
.other { border-left: 2px solid #d0d2d5; padding-left: 26px; }

/* page */
.page { flex: none; height: 1803px; display: flex; }
.side { width: 112px; background: #212121; display: flex; flex-direction: column; padding-left: 40px; fill: #bdbdbd; }
.side .brand { width: 77px; height: 77px; margin: 20px 0 0 -24px; }
.s-search { width: 37px; height: 37px; margin-top: 68px; }
.s-dep { width: 46px; height: 37px; margin-top: 75px; }
.s-home { width: 42px; height: 32px; margin-top: auto; }
.s-globe { width: 38px; height: 38px; margin: 77px 0 55px; }
.main { width: 3686px; display: flex; flex-direction: column; }
.head { height: 197px; background: #fafafa; padding: 0 61px 0 60px; position: relative; z-index: 2; box-shadow: 0 4px 8px rgba(0,0,0,.3), 0 1px 4px rgba(0,0,0,.35); clip-path: inset(0 0 -12px 0); }
.head-top { height: 133px; border-bottom: 3px solid #dedede; display: flex; align-items: center; }
.head h1 { font-size: 52.550px; white-space: pre; }
.head em { color: #757575; }
.upload { width: 80px; height: 69px; border: 3px solid #c0c0c0; border-radius: 9px; margin: 20px 14px 0 auto; display: grid; place-items: center; }
.upload svg { width: 32px; height: 32px; fill: #212121; }
.field { width: 449px; height: 69px; border: 3px solid #c0c0c0; border-radius: 9px; margin: 20px 79px 0 0; position: relative; padding-left: 3px; line-height: 64px; font-size: 35.700px; }
.field .ph { color: #a0a0a0; }
.legend { position: absolute; left: 20px; top: -20px; padding: 0 13px; background: #fafafa; font-size: 26.600px; line-height: 32px; color: #757575; white-space: nowrap; }
.head-stats { height: 64px; display: flex; align-items: center; gap: 19.300px; font-size: 30.500px; letter-spacing: .13px; white-space: nowrap; }
.head-stats b { color: #757575; }
.head-stats .tid { letter-spacing: .45px; }
.download { width: 349px; height: 54px; border: 3px solid #c0c0c0; border-radius: 9px; margin: 9px 0 0 auto; display: flex; align-items: center; padding-left: 36px; font-size: 26px; letter-spacing: -.2px; gap: 21px; }
.download svg { width: 25px; height: 24px; fill: #212121; }

.body { display: flex; height: 1566px; }
.trace { width: 2212px; background: #fafafa; }
.trace-tools { height: 122px; background: #f5f5f5; display: flex; justify-content: space-between; padding: 30px 39px 0 20px; }
.updown { display: flex; width: 158px; height: 72px; border: 3px solid #bdbdbd; border-radius: 9px; }
.updown button { flex: 1; display: grid; place-items: center; }
.updown button + button { border-left: 2px solid #bdbdbd; }
.updown svg { width: 26px; height: 18px; }
.collapse { width: 34px; height: 26px; margin-top: 23px; }
.ticks { height: 37px; background: #f5f5f5; padding: 0 43px 0 618px; display: grid; grid-template-columns: repeat(3, 1fr); font-size: 28.400px; line-height: 38px; }
.ticks > span { border-left: 3px solid #9e9e9e; padding-left: 7px; }
.ticks .two { border-right: 3px solid #9e9e9e; display: flex; justify-content: space-between; padding-right: 8px; }
.rows { position: relative; }
.gridlines { position: absolute; inset: 3px 43px 0 618px; display: grid; grid-template-columns: repeat(3, 1fr); z-index: 1; }
.gridlines i { border-left: 3px solid rgba(0,0,0,.085); }
.gridlines i:last-child { border-right: 3px solid rgba(0,0,0,.085); }
.row { height: 75px; display: flex; align-items: center; position: relative; }
.row::before { content: ""; position: absolute; right: 0; top: 36px; height: 3px; left: 111px; background: #e3e3e3; }
.row.sel { height: 78px; padding-top: 3px; background: #dedede; }
.row.sel::before { left: 619px; top: 39px; background: #cfcfcf; }
.row.down1::before { left: 166px; }
.down1::after, .down2::after { content: ""; position: absolute; left: 165px; bottom: 36px; width: 3px; height: 53px; background: #e3e3e3; }
.down2::after { left: 110px; bottom: auto; top: -17px; height: 204px; }
.tree { width: 619px; display: flex; align-items: center; gap: 19px; position: relative; }
.l0 { padding-left: 90px; }
.l1 { padding-left: 145px; }
.l2 { padding-left: 261px; }
.tog { width: 42px; height: 42px; border: 3px solid #707070; border-radius: 6px; background: linear-gradient(#424242, #424242) center / 100% 5px no-repeat #fff; z-index: 1; }
.svc { width: 354px; height: 50px; border-radius: 7px; overflow: hidden; display: flex; justify-content: center; color: #fff; font-size: 30.700px; line-height: 51px; }
.svc b { font-weight: 400; flex: none; }
.purple { background: #4a2880; }
.blue { background: #2b377c; }
.orange { background: #b26a00; justify-content: flex-start; }
.orange b { margin-left: -4.270em; letter-spacing: .1px; }
.lane { width: 1549px; position: relative; z-index: 2; }
.bar { height: 65px; border-radius: 9px; background: rgba(109,156,180,.8); position: relative; }
.sel .bar { background: #8daab6; }
.bar.red { background: rgba(244,67,54,.8); }
.bar span { position: absolute; left: 21px; top: 5px; font-size: 36.600px; letter-spacing: .12px; line-height: 42px; white-space: nowrap; color: #000; }
.sel .bar span { color: #333; }
.bar span.left { left: auto; right: 22px; }

/* detail */
.detail { width: 1474px; border-left: 3px solid #dedede; background: #f5f5f5; }
.d-head { height: 267px; padding: 55px 61px 0 39px; border-bottom: 3px solid #dedede; }
.detail h2 { font-size: 52.450px; line-height: 59px; }
.sub { font-size: 44.500px; line-height: 50px; margin-top: 16px; color: #757575; white-space: nowrap; }
.ids { display: flex; justify-content: flex-end; gap: 6px; font-size: 28px; letter-spacing: .3px; line-height: 33px; margin-top: 45px; color: #616161; }
.ids b { font-weight: 400; color: #424242; }
.ids .pid { margin-left: 14px; }
.d-body { padding: 30px 39px 0; display: flex; flex-direction: column; }
.detail h3 { font-size: 44.300px; line-height: 50px; font-weight: 700; }
.slider { height: 40px; margin-top: 62px; padding: 0 54px; display: flex; justify-content: space-between; align-items: center; background: linear-gradient(#9b97a5, #9b97a5) 70px 0 / 1253px 2px no-repeat, linear-gradient(#9b97a5, #9b97a5) 70px 38px / 1253px 2px no-repeat, linear-gradient(#4a2880, #4a2880) 70px 0 / 1253px 40px no-repeat, linear-gradient(#9e9e9e, #9e9e9e) center / 100% 3px no-repeat; }
.slider i { width: 33px; height: 33px; border-radius: 50%; background: #fff; border: 2px solid #9e9e9e; }
.showall { align-self: flex-end; width: 481px; height: 83px; margin-top: 83px; background: #e0e0e0; border-radius: 8px; font-size: 30px; letter-spacing: 1.460px; box-shadow: 0 2px 6px rgba(0,0,0,.2), 0 4px 5px rgba(0,0,0,.22); }
.tags-h { margin-top: 60px; }
.tags { margin-top: 20px; background: #fff; border-radius: 8px; box-shadow: 0 2px 6px rgba(0,0,0,.2), 0 3px 3px rgba(0,0,0,.3); overflow: hidden; }
.tags div { height: 137px; padding: 25px 40px 0; border-bottom: 3px solid #dedede; }
.tags dt { font-size: 31.300px; line-height: 36px; font-weight: 700; color: #9e9e9e; }
.tags dd { font-size: 37.300px; line-height: 42px; margin-top: 7px; }

/* scrollbars */
.hbar { height: 40px; background: #f1f1f1; display: flex; justify-content: space-between; align-items: center; padding: 2px 16px 0; }
.hbar .thumb { width: 3600px; height: 38px; background: #c1c1c1; }
.hbar i { border: 10px solid transparent; border-left-width: 0; border-right: 10px solid #a3a3a3; }
.hbar .ar { border-right-width: 0; border-left: 10px solid #505050; }
.vbar { width: 42px; background: #f1f1f1; display: flex; flex-direction: column; align-items: center; padding-top: 17px; }
.vbar .thumb { width: 38px; height: 1503px; margin: 15px 0 191px; background: #c1c1c1; }
.vbar i { border: 10px solid transparent; border-top-width: 0; border-bottom: 10px solid #a3a3a3; }
.vbar .ad { border-bottom-width: 0; border-top: 11px solid #505050; }
.vbar .corner { width: 42px; height: 40px; background: #dcdcdc; margin-top: auto; }

/* taskbar */
.taskbar { flex: none; height: 100px; background: #1e1e1e; display: flex; align-items: center; }
.start { width: 120px; padding-left: 40px; }
.start svg { width: 40px; height: 40px; }
.search { width: 860px; height: 100px; background: #f2f2f2; border: 3px solid #c0c0c0; display: flex; align-items: center; padding-left: 29px; gap: 32px; font: 38px/50px "Open Sans", "Noto Sans", sans-serif; color: #333; letter-spacing: -.75px; }
.search svg { width: 48px; height: 48px; }
.search span { padding-top: 2px; }
.cortana { width: 40px; height: 40px; margin-left: 40px; }
.grip { width: 10px; height: 76px; border: solid #505050; border-width: 0 2px; margin-left: 54px; }
.apps { display: flex; height: 100px; margin-left: 26px; }
.app { width: 119.300px; height: 100px; display: grid; place-items: center; }
.app svg { width: 60px; height: 60px; }
.app svg.cmdi { width: 58px; height: 48px; }
.app.run { background: linear-gradient(#76b9ed, #76b9ed) center bottom / 97px 5px no-repeat; }
.app.multi { background: linear-gradient(90deg, #76b9ed 74px, #1e1e1e 74px, #1e1e1e 75px, #5590be 75px) center bottom / 97px 5px no-repeat; }
.app.hov { background: linear-gradient(#353535, #353535) center / 116px 100px no-repeat; }
.app.act { background: linear-gradient(#76b9ed, #76b9ed) center bottom / 116px 5px no-repeat, linear-gradient(#4b4b4b, #4b4b4b) center / 116px 100px no-repeat; }
.tray { display: flex; align-items: center; height: 100px; margin-left: 20px; flex: 1; color: #fff; }
.help { width: 48px; height: 44px; margin-top: 5px; }
.caret { width: 30px; height: 17px; margin-left: 22px; }
.batt { width: 40px; height: 28px; margin-left: 25px; }
.vol { width: 40px; height: 36px; margin-left: 20px; }
.stack { display: flex; flex-direction: column; align-items: center; font: 28px/43px "Open Sans", "Noto Sans", sans-serif; letter-spacing: -.5px; margin-top: 2px; }
.lang { width: 58px; margin-left: 26px; }
.clock { width: 154px; margin-left: 32px; line-height: 47px; }
.date { letter-spacing: .55px; }
.note { position: relative; width: 40px; height: 40px; margin-left: 46px; }
.note svg { width: 40px; height: 40px; }
.note span { position: absolute; left: 15px; top: 15px; width: 46px; height: 46px; border-radius: 50%; border: 2px solid #999; background: #333; font: 600 27px/42px "Open Sans", sans-serif; letter-spacing: -1px; text-align: center; }
.peek { width: 2px; height: 100px; background: #777; margin-left: 51px; }
```
